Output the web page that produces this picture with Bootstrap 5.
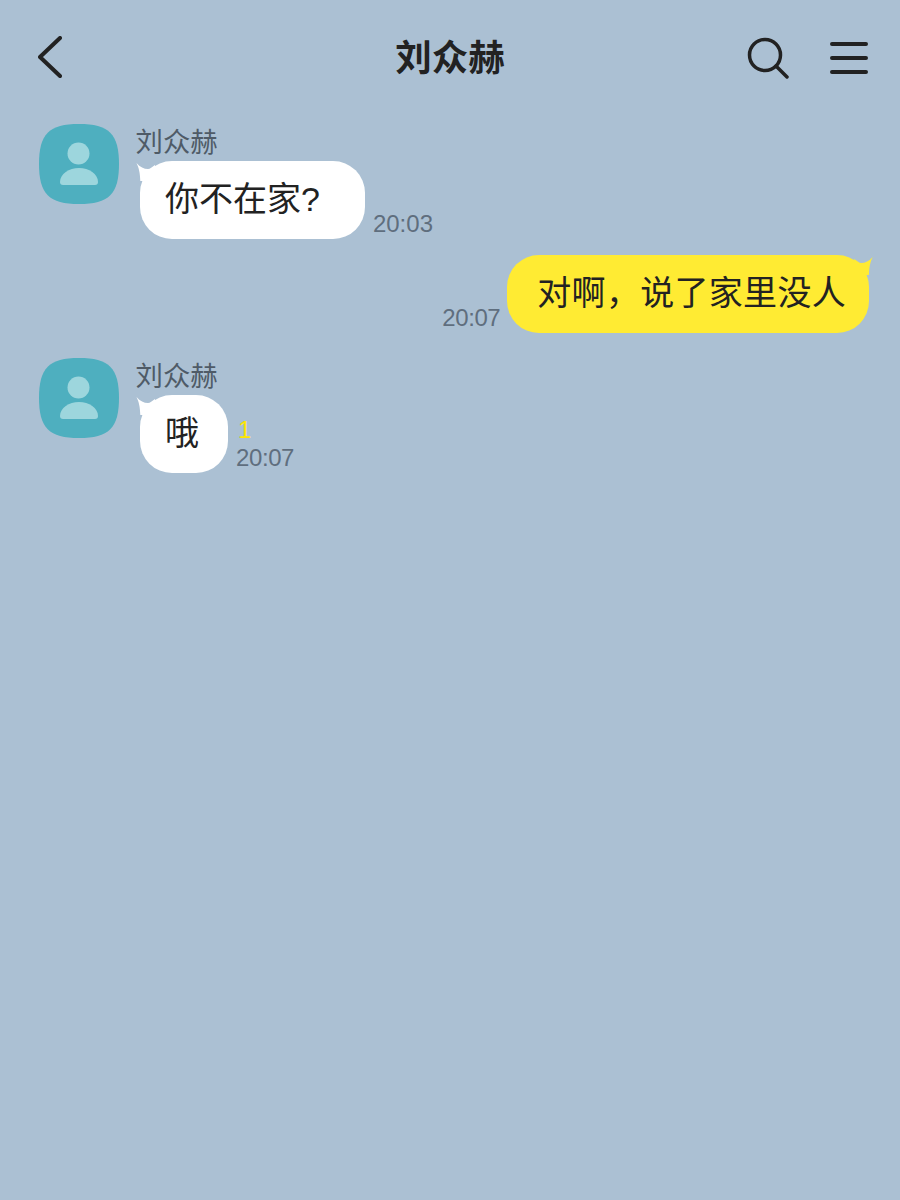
<!DOCTYPE html>
<html lang="zh-CN">
<head>
    <meta charset="UTF-8">
    <meta name="viewport" content="width=device-width, initial-scale=1.0">
    <title>刘众赫</title>
    <link href="https://cdn.jsdelivr.net/npm/bootstrap@5.3.2/dist/css/bootstrap.min.css" rel="stylesheet">
    <style>
        body {
            background: #abc0d3;
            font-family: "Liberation Sans", "Noto Sans CJK SC", sans-serif;
            color: #222;
            min-height: 1200px;
        }
        .chat-head {
            height: 124px;
            padding: 0 32px 8px 38px;
        }
        .chat-title {
            font-size: 36.5px;
            font-weight: 700;
            line-height: 1;
            color: #222;
            padding-top: 2px;
        }
        .head-left { width: 140px; }
        .head-left svg { margin-bottom: 3px; }
        .head-right { width: 146px; gap: 41px; }
        .chat-list { padding: 0 31px 0 39px; }
        .msg-gap-a { margin-top: 16px; }
        .msg-gap-b { margin-top: 25px; }
        .avatar-box { width: 80px; height: 80px; flex: none; }
        .sender {
            font-size: 27.4px;
            line-height: 37px;
            height: 37px;
            color: #4f5b67;
            margin-left: 16.5px;
        }
        .bubble {
            position: relative;
            height: 78px;
            border-radius: 32px;
            font-size: 34px;
            line-height: 76px;
            white-space: nowrap;
            color: #222;
        }
        .bubble-in { background: #fff; margin-left: 21px; padding-left: 25px; }
        .bubble-wide { padding-right: 45px; }
        .bubble-short { padding-right: 29px; }
        .bubble-out { background: #ffeb33; padding: 0 23px 0 30px; letter-spacing: .3px; }
        .bubble-tail { position: absolute; top: 0; width: 22px; height: 20px; }
        .tail-in { left: -5px; }
        .tail-out { right: -5px; }
        .msg-meta { font-size: 24px; line-height: 28px; color: #5f6e7e; padding-bottom: 1px; }
        .meta-narrow { letter-spacing: -.4px; }
        .meta-out { margin-right: 7px; }
        .unread { color: #fee500; line-height: 28px; font-size: 24px; margin-left: 2px; }
    </style>
</head>
<body>
    <header class="chat-head d-flex align-items-center justify-content-between">
        <div class="head-left">
            <svg width="24" height="42" viewBox="0 0 24 42" fill="none" stroke="#222" stroke-width="4" stroke-linecap="round" stroke-linejoin="round" class="d-block"><path d="M22 2 2 21l20 19"/></svg>
        </div>
        <div class="chat-title">刘众赫</div>
        <div class="head-right d-flex justify-content-end align-items-center">
            <svg width="42" height="42" viewBox="0 0 42 42" fill="none" stroke="#222" stroke-width="3.5" stroke-linecap="round" class="d-block"><circle cx="18" cy="18" r="15.5"/><path d="M29 29l11 11"/></svg>
            <svg width="38" height="32" viewBox="0 0 38 32" fill="none" stroke="#222" stroke-width="4" stroke-linecap="round" class="d-block"><path d="M2 2h34M2 16h34M2 30h34"/></svg>
        </div>
    </header>

    <main class="chat-list">
        <div class="d-flex">
            <svg class="avatar-box" viewBox="0 0 80 80"><path d="M40 0C70 0 80 10 80 40S70 80 40 80 0 70 0 40 10 0 40 0z" fill="#4eafbf"/><circle cx="39.5" cy="29.5" r="11" fill="#9dd6dd"/><path d="M21 58C21 50 30 44 40 44S59 50 59 58c0 2-1 3-3 3H24c-2 0-3-1-3-3z" fill="#9dd6dd"/></svg>
            <div>
                <div class="sender">刘众赫</div>
                <div class="d-flex align-items-end">
                    <div class="bubble bubble-in bubble-wide">
                        <svg class="bubble-tail tail-in" viewBox="0 0 22 20"><path d="M1.5 2C5 6 9 8 13 8 15 8 17 6 20 4V20H5.3C5 12 4 7 1.5 2z" fill="#fff"/></svg>
                        你不在家?
                    </div>
                    <div class="msg-meta ms-2">20:03</div>
                </div>
            </div>
        </div>

        <div class="d-flex justify-content-end align-items-end msg-gap-a">
            <div class="msg-meta meta-narrow meta-out">20:07</div>
            <div class="bubble bubble-out">
                <svg class="bubble-tail tail-out" viewBox="0 0 22 20"><path d="M20.7 2C17.2 6 13.2 8 9.2 8 7.2 8 5.2 6 2.2 4V20H16.9C17.2 12 18.2 7 20.7 2z" fill="#ffeb33"/></svg>
                对啊，说了家里没人
            </div>
        </div>

        <div class="d-flex msg-gap-b">
            <svg class="avatar-box" viewBox="0 0 80 80"><path d="M40 0C70 0 80 10 80 40S70 80 40 80 0 70 0 40 10 0 40 0z" fill="#4eafbf"/><circle cx="39.5" cy="29.5" r="11" fill="#9dd6dd"/><path d="M21 58C21 50 30 44 40 44S59 50 59 58c0 2-1 3-3 3H24c-2 0-3-1-3-3z" fill="#9dd6dd"/></svg>
            <div>
                <div class="sender">刘众赫</div>
                <div class="d-flex align-items-end">
                    <div class="bubble bubble-in bubble-short">
                        <svg class="bubble-tail tail-in" viewBox="0 0 22 20"><path d="M1.5 2C5 6 9 8 13 8 15 8 17 6 20 4V20H5.3C5 12 4 7 1.5 2z" fill="#fff"/></svg>
                        哦
                    </div>
                    <div class="ms-2">
                        <div class="unread">1</div>
                        <div class="msg-meta meta-narrow">20:07</div>
                    </div>
                </div>
            </div>
        </div>
    </main>

    <script src="https://cdn.jsdelivr.net/npm/bootstrap@5.3.2/dist/js/bootstrap.bundle.min.js"></script>
</body>
</html>
